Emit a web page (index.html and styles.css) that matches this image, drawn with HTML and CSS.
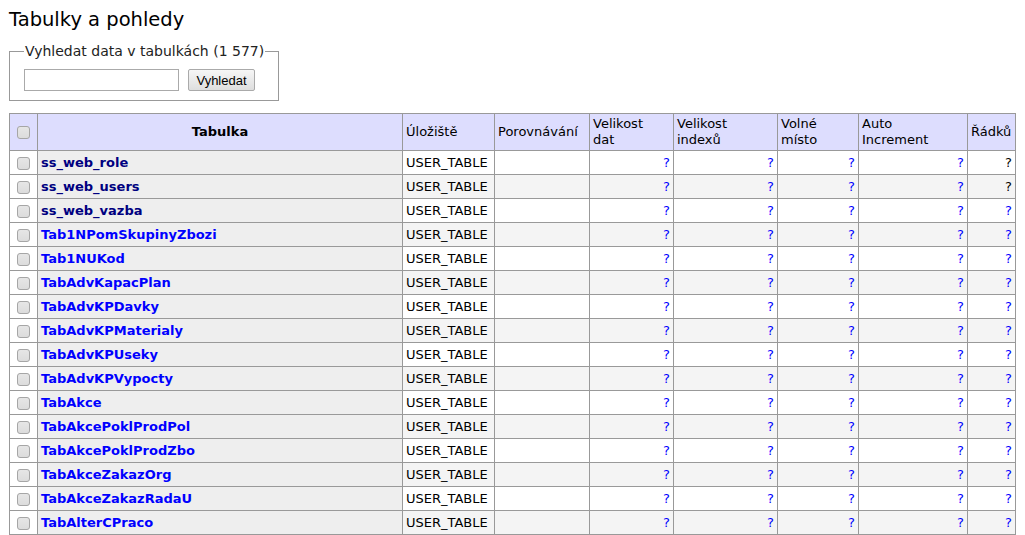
FILE: index.html
```html
<!DOCTYPE html>
<html lang="cs">
<head>
<meta charset="utf-8">
<title>Tabulky a pohledy</title>
<link rel="stylesheet" href="styles.css">
</head>
<body>
<h1 class="title">Tabulky a pohledy</h1>
<fieldset class="search">
  <legend>Vyhledat data v tabulkách (1 577)</legend>
  <input class="search-input" type="text"><button class="search-btn" type="button">Vyhledat</button>
</fieldset>
<table class="grid">
  <colgroup>
    <col class="c-check"><col class="c-name"><col class="c-store"><col class="c-coll"><col class="c-data"><col class="c-index"><col class="c-free"><col class="c-auto"><col class="c-rows">
  </colgroup>
  <thead>
    <tr>
      <th class="check-cell"><input type="checkbox" class="cb"></th>
      <th class="name-head">Tabulka</th>
      <th>Úložiště</th>
      <th>Porovnávání</th>
      <th>Velikost<br>dat</th>
      <th>Velikost<br>indexů</th>
      <th>Volné<br>místo</th>
      <th>Auto<br>Increment</th>
      <th>Řádků</th>
    </tr>
  </thead>
  <tbody>
    <tr class="odd"><td class="check-cell"><input type="checkbox" class="cb"></td><td class="name"><a class="visited" href="#">ss_web_role</a></td><td>USER_TABLE</td><td></td><td class="num"><a href="#">?</a></td><td class="num"><a href="#">?</a></td><td class="num"><a href="#">?</a></td><td class="num"><a href="#">?</a></td><td class="num">?</td></tr>
    <tr class="even"><td class="check-cell"><input type="checkbox" class="cb"></td><td class="name"><a class="visited" href="#">ss_web_users</a></td><td>USER_TABLE</td><td></td><td class="num"><a href="#">?</a></td><td class="num"><a href="#">?</a></td><td class="num"><a href="#">?</a></td><td class="num"><a href="#">?</a></td><td class="num">?</td></tr>
    <tr class="odd"><td class="check-cell"><input type="checkbox" class="cb"></td><td class="name"><a class="visited" href="#">ss_web_vazba</a></td><td>USER_TABLE</td><td></td><td class="num"><a href="#">?</a></td><td class="num"><a href="#">?</a></td><td class="num"><a href="#">?</a></td><td class="num"><a href="#">?</a></td><td class="num"><a href="#">?</a></td></tr>
    <tr class="even"><td class="check-cell"><input type="checkbox" class="cb"></td><td class="name"><a href="#">Tab1NPomSkupinyZbozi</a></td><td>USER_TABLE</td><td></td><td class="num"><a href="#">?</a></td><td class="num"><a href="#">?</a></td><td class="num"><a href="#">?</a></td><td class="num"><a href="#">?</a></td><td class="num"><a href="#">?</a></td></tr>
    <tr class="odd"><td class="check-cell"><input type="checkbox" class="cb"></td><td class="name"><a href="#">Tab1NUKod</a></td><td>USER_TABLE</td><td></td><td class="num"><a href="#">?</a></td><td class="num"><a href="#">?</a></td><td class="num"><a href="#">?</a></td><td class="num"><a href="#">?</a></td><td class="num"><a href="#">?</a></td></tr>
    <tr class="even"><td class="check-cell"><input type="checkbox" class="cb"></td><td class="name"><a href="#">TabAdvKapacPlan</a></td><td>USER_TABLE</td><td></td><td class="num"><a href="#">?</a></td><td class="num"><a href="#">?</a></td><td class="num"><a href="#">?</a></td><td class="num"><a href="#">?</a></td><td class="num"><a href="#">?</a></td></tr>
    <tr class="odd"><td class="check-cell"><input type="checkbox" class="cb"></td><td class="name"><a href="#">TabAdvKPDavky</a></td><td>USER_TABLE</td><td></td><td class="num"><a href="#">?</a></td><td class="num"><a href="#">?</a></td><td class="num"><a href="#">?</a></td><td class="num"><a href="#">?</a></td><td class="num"><a href="#">?</a></td></tr>
    <tr class="even"><td class="check-cell"><input type="checkbox" class="cb"></td><td class="name"><a href="#">TabAdvKPMaterialy</a></td><td>USER_TABLE</td><td></td><td class="num"><a href="#">?</a></td><td class="num"><a href="#">?</a></td><td class="num"><a href="#">?</a></td><td class="num"><a href="#">?</a></td><td class="num"><a href="#">?</a></td></tr>
    <tr class="odd"><td class="check-cell"><input type="checkbox" class="cb"></td><td class="name"><a href="#">TabAdvKPUseky</a></td><td>USER_TABLE</td><td></td><td class="num"><a href="#">?</a></td><td class="num"><a href="#">?</a></td><td class="num"><a href="#">?</a></td><td class="num"><a href="#">?</a></td><td class="num"><a href="#">?</a></td></tr>
    <tr class="even"><td class="check-cell"><input type="checkbox" class="cb"></td><td class="name"><a href="#">TabAdvKPVypocty</a></td><td>USER_TABLE</td><td></td><td class="num"><a href="#">?</a></td><td class="num"><a href="#">?</a></td><td class="num"><a href="#">?</a></td><td class="num"><a href="#">?</a></td><td class="num"><a href="#">?</a></td></tr>
    <tr class="odd"><td class="check-cell"><input type="checkbox" class="cb"></td><td class="name"><a href="#">TabAkce</a></td><td>USER_TABLE</td><td></td><td class="num"><a href="#">?</a></td><td class="num"><a href="#">?</a></td><td class="num"><a href="#">?</a></td><td class="num"><a href="#">?</a></td><td class="num"><a href="#">?</a></td></tr>
    <tr class="even"><td class="check-cell"><input type="checkbox" class="cb"></td><td class="name"><a href="#">TabAkcePoklProdPol</a></td><td>USER_TABLE</td><td></td><td class="num"><a href="#">?</a></td><td class="num"><a href="#">?</a></td><td class="num"><a href="#">?</a></td><td class="num"><a href="#">?</a></td><td class="num"><a href="#">?</a></td></tr>
    <tr class="odd"><td class="check-cell"><input type="checkbox" class="cb"></td><td class="name"><a href="#">TabAkcePoklProdZbo</a></td><td>USER_TABLE</td><td></td><td class="num"><a href="#">?</a></td><td class="num"><a href="#">?</a></td><td class="num"><a href="#">?</a></td><td class="num"><a href="#">?</a></td><td class="num"><a href="#">?</a></td></tr>
    <tr class="even"><td class="check-cell"><input type="checkbox" class="cb"></td><td class="name"><a href="#">TabAkceZakazOrg</a></td><td>USER_TABLE</td><td></td><td class="num"><a href="#">?</a></td><td class="num"><a href="#">?</a></td><td class="num"><a href="#">?</a></td><td class="num"><a href="#">?</a></td><td class="num"><a href="#">?</a></td></tr>
    <tr class="odd"><td class="check-cell"><input type="checkbox" class="cb"></td><td class="name"><a href="#">TabAkceZakazRadaU</a></td><td>USER_TABLE</td><td></td><td class="num"><a href="#">?</a></td><td class="num"><a href="#">?</a></td><td class="num"><a href="#">?</a></td><td class="num"><a href="#">?</a></td><td class="num"><a href="#">?</a></td></tr>
    <tr class="even"><td class="check-cell"><input type="checkbox" class="cb"></td><td class="name"><a href="#">TabAlterCPraco</a></td><td>USER_TABLE</td><td></td><td class="num"><a href="#">?</a></td><td class="num"><a href="#">?</a></td><td class="num"><a href="#">?</a></td><td class="num"><a href="#">?</a></td><td class="num"><a href="#">?</a></td></tr>
  </tbody>
</table>
</body>
</html>
```

FILE: styles.css
```css
html, body {
  margin: 0;
  padding: 0;
  background: #fff;
}
body {
  padding: 8px 10px 0 9px;
  font-family: "DejaVu Sans", Verdana, sans-serif;
  font-size: 13px;
  color: #000;
}
.title {
  font-size: 19.5px;
  font-weight: normal;
  margin: 1px 0 12px 0;
  line-height: 22px;
}
.search {
  width: 270px;
  box-sizing: border-box;
  margin: 0;
  padding: 10px 0 8px 14px;
  border: 1px solid #999;
  height: 58px;
}
.search legend {
  padding: 0 1px;
  font-size: 14px;
  color: #222;
}
.search-input {
  width: 155px;
  height: 22px;
  box-sizing: border-box;
  border: 1px solid #aaa;
  margin: 0 9px 0 0;
  padding: 0;
  vertical-align: middle;
}
.search-btn {
  font-family: "Liberation Sans", Arial, sans-serif;
  font-size: 13px;
  height: 22px;
  width: 67px;
  padding: 0;
  border: 1px solid #aaa;
  border-radius: 2px;
  background: linear-gradient(#f6f6f6, #dedede);
  color: #000;
  vertical-align: middle;
}
.grid {
  margin-top: 12px;
  width: 1006px;
  table-layout: fixed;
  border-collapse: collapse;
  border: 1px solid #999;
}
.c-check { width: 28px; }
.c-name { width: 365px; }
.c-store { width: 92px; }
.c-coll { width: 95px; }
.c-data { width: 84px; }
.c-index { width: 104px; }
.c-free { width: 81px; }
.c-auto { width: 109px; }
.c-rows { width: 48px; }
.grid th, .grid td {
  border: 1px solid #999;
  padding: 0 3px;
  vertical-align: middle;
}
.grid th {
  background: #ddddfe;
  font-weight: normal;
  text-align: left;
  height: 36px;
  line-height: 16px;
  color: #000;
}
.grid th.name-head {
  text-align: center;
  font-weight: bold;
}
.grid td {
  height: 23px;
  line-height: 16px;
  white-space: nowrap;
}
.grid tr.odd td { background: #fff; }
.grid tr.even td { background: #f4f4f4; }
.grid tr td.name { background: #eee; }
.grid tr td.check-cell, .grid th.check-cell { text-align: center; padding: 0; }
.grid tr td.check-cell { background: #fff; }
.name a {
  font-weight: bold;
  color: #0000ff;
  text-decoration: none;
}
.name a.visited { color: #000080; }
.num { text-align: right; color: #000; }
.num a { color: #0000ff; text-decoration: none; }
.cb {
  appearance: none;
  -webkit-appearance: none;
  width: 13px;
  height: 13px;
  margin: 0;
  border: 1px solid #a6a6a6;
  border-radius: 3px;
  background: linear-gradient(#e6e6e6, #dcdcdc);
  vertical-align: middle;
  display: inline-block;
}
```
